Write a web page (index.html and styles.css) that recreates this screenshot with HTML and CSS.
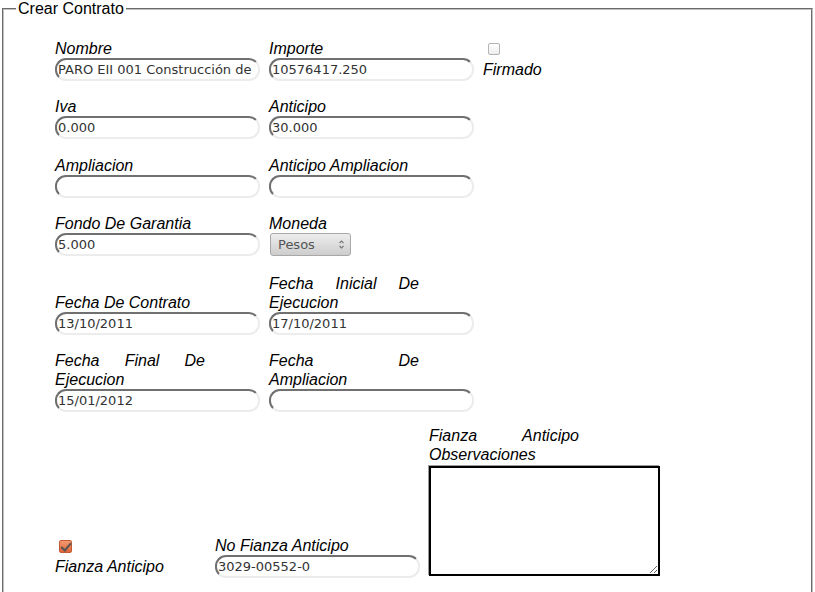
FILE: index.html
```html
<!DOCTYPE html>
<html lang="es">
<head>
  <meta charset="UTF-8" />
  <title>Crear Contrato</title>
  <link rel="stylesheet" href="styles.css">
</head>
<body>
  <fieldset class="contract">
    <legend>Crear Contrato</legend>

    <div class="form-body">
      <div class="row">
        <div class="cell">
          <label for="nombre">Nombre</label>
          <input type="text" id="nombre" value="PARO EII 001 Construcción de Vialidad">
        </div>
        <div class="cell">
          <label for="importe">Importe</label>
          <input type="text" id="importe" value="10576417.250">
        </div>
        <div class="cell cell-check">
          <input type="checkbox" id="firmado" class="check">
          <label for="firmado">Firmado</label>
        </div>
      </div>

      <div class="row">
        <div class="cell">
          <label for="iva">Iva</label>
          <input type="text" id="iva" value="0.000">
        </div>
        <div class="cell">
          <label for="anticipo">Anticipo</label>
          <input type="text" id="anticipo" value="30.000">
        </div>
      </div>

      <div class="row">
        <div class="cell">
          <label for="ampliacion">Ampliacion</label>
          <input type="text" id="ampliacion">
        </div>
        <div class="cell">
          <label for="anticipo-ampliacion">Anticipo Ampliacion</label>
          <input type="text" id="anticipo-ampliacion">
        </div>
      </div>

      <div class="row row-moneda">
        <div class="cell">
          <label for="fondo">Fondo De Garantia</label>
          <input type="text" id="fondo" value="5.000">
        </div>
        <div class="cell">
          <label for="moneda">Moneda</label>
          <span class="select-wrap">
            <select id="moneda">
              <option>Pesos</option>
              <option>Dolares</option>
            </select>
            <svg class="arrows" width="7" height="11" viewBox="0 0 7 11">
              <path d="M1.5 4 L3.5 2 L5.5 4" fill="none" stroke="#777" stroke-width="1.1"/>
              <path d="M1.5 7 L3.5 9 L5.5 7" fill="none" stroke="#777" stroke-width="1.1"/>
            </svg>
          </span>
        </div>
      </div>

      <div class="row">
        <div class="cell">
          <label for="fecha-contrato">Fecha De Contrato</label>
          <input type="text" id="fecha-contrato" value="13/10/2011">
        </div>
        <div class="cell">
          <label for="fecha-inicial">Fecha Inicial De Ejecucion</label>
          <input type="text" id="fecha-inicial" value="17/10/2011">
        </div>
      </div>

      <div class="row">
        <div class="cell">
          <label for="fecha-final">Fecha Final De Ejecucion</label>
          <input type="text" id="fecha-final" value="15/01/2012">
        </div>
        <div class="cell">
          <label for="fecha-ampliacion">Fecha De Ampliacion</label>
          <input type="text" id="fecha-ampliacion">
        </div>
      </div>

      <div class="row row-fianza">
        <div class="cell cell-check">
          <input type="checkbox" id="fianza" class="check" checked>
          <label for="fianza">Fianza Anticipo</label>
        </div>
        <div class="cell">
          <label for="no-fianza">No Fianza Anticipo</label>
          <input type="text" id="no-fianza" value="3029-00552-0">
        </div>
        <div class="cell">
          <label for="observaciones">Fianza Anticipo Observaciones</label>
          <textarea id="observaciones"></textarea>
        </div>
      </div>
    </div>
  </fieldset>
</body>
</html>
```

FILE: styles.css
```css
body {
  margin: 0;
  background-color: #fff;
  color: #000;
  font-family: 'Liberation Sans', Arial, sans-serif;
}

.contract {
  margin: 0 2px;
  padding: 21px 12px 60px 12px;
  border: 2px groove #c0c0c0;
}

.contract legend {
  font-size: 16px;
  padding: 0 2px;
}

.form-body {
  padding-left: 39px;
}

.row {
  display: grid;
  grid-template-columns: 214px 214px auto;
  align-items: end;
  margin-bottom: 16.3px;
}

.row-moneda {
  margin-bottom: 18px;
}

.row-fianza {
  grid-template-columns: 160px 214px auto;
  margin-top: -2px;
}

.cell {
  display: flex;
  flex-direction: column;
  align-items: flex-start;
}

.cell-check {
  margin-bottom: 2px;
}

.cell label {
  display: block;
  width: 150px;
  font-size: 16px;
  font-style: italic;
  line-height: 19px;
  text-align: justify;
}

.cell input[type="text"] {
  box-sizing: border-box;
  width: 205px;
  height: 23px;
  margin: 0;
  padding: 0 4px 0 1px;
  border: 2px solid #ececec;
  border-top-color: #707070;
  border-left-color: #707070;
  border-radius: 11px;
  background: #fff;
  color: #333;
  font-family: 'DejaVu Sans', sans-serif;
  font-size: 13px;
}

.check {
  appearance: none;
  box-sizing: border-box;
  position: relative;
  width: 12px;
  height: 12px;
  margin: 3px 3px 5px 5px;
  border: 1px solid #b4b4b4;
  border-radius: 2px;
  background: linear-gradient(#fff, #ededed);
}

.check:checked {
  width: 13px;
  height: 13px;
  margin: 3px 3px 4px 4px;
  border-color: #c25a34;
  background: linear-gradient(#f49a72, #df6437);
}

.check:checked::after {
  content: "";
  position: absolute;
  left: 3px;
  top: 0px;
  width: 4px;
  height: 8px;
  border: solid #555;
  border-width: 0 2px 2px 0;
  transform: rotate(40deg);
}

.select-wrap {
  position: relative;
  display: inline-block;
}

.select-wrap select {
  appearance: none;
  box-sizing: border-box;
  width: 81px;
  height: 23px;
  margin: 0 0 0 1px;
  padding: 0 0 0 7px;
  border: 1px solid #a8a8a8;
  border-radius: 3px;
  background: linear-gradient(#ededed, #cdcdcd);
  color: #555;
  font-family: 'DejaVu Sans', sans-serif;
  font-size: 13px;
}

.select-wrap .arrows {
  position: absolute;
  right: 6px;
  top: 6px;
  pointer-events: none;
}

textarea {
  box-sizing: border-box;
  width: 231px;
  height: 110px;
  margin: 1.5px 0 2px;
  border: 2px solid #000;
  box-shadow: -1px -1px 0 #9c9c9c;
  resize: both;
}
```
